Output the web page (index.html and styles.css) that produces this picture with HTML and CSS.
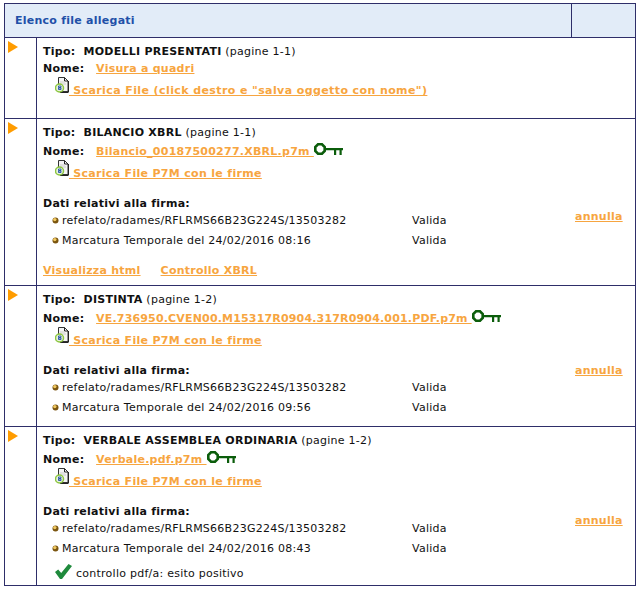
FILE: index.html
```html
<!DOCTYPE html>
<html lang="it">
<head>
    <meta charset="UTF-8">
    <title>Elenco file allegati</title>
    <link rel="stylesheet" href="styles.css">
</head>
<body>
    <svg class="defs" width="0" height="0">
        <symbol id="doc" viewBox="0 0 14 16">
            <path d="M3.500.5h6l3.500 3.500v10.500h-9.500z" fill="#f4f4f4" stroke="#333"/>
            <path d="M9.500.5v3.500h3.500M13.500 4v11M5 15.500h8.500" fill="none" stroke="#222"/>
            <path d="M5 5h5M5 7h6" stroke="#ccc"/>
            <circle cx="4.500" cy="11" r="4" fill="#e8f2e0" stroke="#8cc63f" stroke-width="1.500"/>
            <path d="M3.500 9h2.500v1.500h-2.500zM3.500 11h2.500v1.500h-2.500z" fill="none" stroke="#1f4fa8" stroke-width=".9"/>
        </symbol>
        <symbol id="key" viewBox="0 0 29 13">
            <path d="M4 1.300h4l2.700 2.700v4l-2.700 2.700h-4l-2.700-2.700v-4z" fill="none" stroke="#0b5d0b" stroke-width="2.600"/>
            <path d="M11 5h18v2.200h-18zM20 6h2.200v6h-2.200zM25.500 6h2.200v6h-2.200z" fill="#0b5d0b"/>
        </symbol>
        <symbol id="bullet" viewBox="0 0 7 7">
            <circle cx="3.500" cy="3.500" r="3" fill="#7a5510"/>
            <circle cx="2.800" cy="2.600" r="1.700" fill="#f0c860"/>
        </symbol>
    </svg>

    <table class="elenco">
        <colgroup>
            <col class="col-freccia">
            <col class="col-main">
            <col class="col-extra">
        </colgroup>
        <tr class="testata">
            <th colspan="2">Elenco file allegati</th>
            <th></th>
        </tr>

        <tr class="riga-1">
            <td class="freccia"><span class="triangolo"></span></td>
            <td colspan="2" class="dettagli">
                <p class="tipo"><b>Tipo:&nbsp; MODELLI PRESENTATI</b> (pagine 1-1)</p>
                <p class="nome"><b>Nome:</b> <a href="#">Visura a quadri</a></p>
                <p class="scarica">
                    <svg class="ico-doc"><use href="#doc"/></svg><a href="#"> Scarica File (click destro e "salva oggetto con nome")</a>
                </p>
            </td>
        </tr>

        <tr class="riga-2">
            <td class="freccia"><span class="triangolo"></span></td>
            <td colspan="2" class="dettagli">
                <p class="tipo"><b>Tipo:&nbsp; BILANCIO XBRL</b> (pagine 1-1)</p>
                <p class="nome"><b>Nome:</b> <a href="#">Bilancio_00187500277.XBRL.p7m </a><svg class="ico-key"><use href="#key"/></svg></p>
                <p class="scarica">
                    <svg class="ico-doc"><use href="#doc"/></svg><a href="#"> Scarica File P7M con le firme</a>
                </p>
                <p class="dati"><b>Dati relativi alla firma:</b></p>
                <div class="firme">
                    <svg class="ico-bullet"><use href="#bullet"/></svg>
                    <span>refelato/radames/RFLRMS66B23G224S/13503282</span>
                    <span>Valida</span>
                    <a class="annulla" href="#">annulla</a>
                    <svg class="ico-bullet"><use href="#bullet"/></svg>
                    <span>Marcatura Temporale del 24/02/2016 08:16</span>
                    <span>Valida</span>
                </div>
                <p class="azioni"><a href="#">Visualizza html</a><a href="#">Controllo XBRL</a></p>
            </td>
        </tr>

        <tr class="riga-3">
            <td class="freccia"><span class="triangolo"></span></td>
            <td colspan="2" class="dettagli">
                <p class="tipo"><b>Tipo:&nbsp; DISTINTA</b> (pagine 1-2)</p>
                <p class="nome"><b>Nome:</b> <a class="lungo" href="#">VE.736950.CVEN00.M15317R0904.317R0904.001.PDF.p7m </a><svg class="ico-key"><use href="#key"/></svg></p>
                <p class="scarica">
                    <svg class="ico-doc"><use href="#doc"/></svg><a href="#"> Scarica File P7M con le firme</a>
                </p>
                <p class="dati"><b>Dati relativi alla firma:</b></p>
                <div class="firme">
                    <svg class="ico-bullet"><use href="#bullet"/></svg>
                    <span>refelato/radames/RFLRMS66B23G224S/13503282</span>
                    <span>Valida</span>
                    <a class="annulla" href="#">annulla</a>
                    <svg class="ico-bullet"><use href="#bullet"/></svg>
                    <span>Marcatura Temporale del 24/02/2016 09:56</span>
                    <span>Valida</span>
                </div>
            </td>
        </tr>

        <tr class="riga-4">
            <td class="freccia"><span class="triangolo"></span></td>
            <td colspan="2" class="dettagli">
                <p class="tipo"><b>Tipo:&nbsp; VERBALE ASSEMBLEA ORDINARIA</b> (pagine 1-2)</p>
                <p class="nome"><b>Nome:</b> <a href="#">Verbale.pdf.p7m </a><svg class="ico-key"><use href="#key"/></svg></p>
                <p class="scarica">
                    <svg class="ico-doc"><use href="#doc"/></svg><a href="#"> Scarica File P7M con le firme</a>
                </p>
                <p class="dati"><b>Dati relativi alla firma:</b></p>
                <div class="firme">
                    <svg class="ico-bullet"><use href="#bullet"/></svg>
                    <span>refelato/radames/RFLRMS66B23G224S/13503282</span>
                    <span>Valida</span>
                    <a class="annulla" href="#">annulla</a>
                    <svg class="ico-bullet"><use href="#bullet"/></svg>
                    <span>Marcatura Temporale del 24/02/2016 08:43</span>
                    <span>Valida</span>
                </div>
                <p class="esito">
                    <svg class="ico-check" viewBox="0 0 17 15"><path d="M0 8l3.200-2.500 3 3.500 7.300-9 3.500 2-10 13h-2z" fill="#1f8a3c"/></svg>
                    controllo pdf/a: esito positivo
                </p>
            </td>
        </tr>
    </table>
</body>
</html>
```

FILE: styles.css
```css
body {
    font-family: "DejaVu Sans", Verdana, sans-serif;
    font-size: 11px;
    letter-spacing: 0.25px;
    margin: 3px 0 0 4px;
    background-color: #fff;
    color: #111;
}

p {
    margin: 0;
}

a {
    color: #f7a540;
    font-weight: bold;
}

a.lungo {
    letter-spacing: 0.17px;
}

.defs {
    position: absolute;
}

.elenco {
    border-collapse: collapse;
    table-layout: fixed;
    width: 632px;
}

.elenco th,
.elenco td {
    border: 1px solid #2e2e69;
    padding: 0;
    vertical-align: top;
}

.col-freccia {
    width: 32px;
}

.col-extra {
    width: 64px;
}

.testata {
    height: 34px;
    background: #e2ecf8;
}

.testata th {
    color: #1f50a8;
    font-size: 11px;
    text-align: left;
    vertical-align: middle;
    padding-left: 10px;
}

.riga-1 { height: 81px; }
.riga-2 { height: 167px; }
.riga-3 { height: 141px; }
.riga-4 { height: 159px; }

.triangolo {
    display: block;
    margin: 3px 0 0 3px;
    width: 0;
    height: 0;
    border-left: 10px solid #ff9c00;
    border-top: 6px solid transparent;
    border-bottom: 6px solid transparent;
}

.elenco .dettagli {
    padding: 7px 0 0 6px;
}

.tipo {
    line-height: 14px;
}

.nome {
    margin-top: 3px;
    line-height: 16px;
    white-space: nowrap;
}

.riga-1 .nome {
    margin-top: 2px;
}

.nome a {
    margin-left: 8px;
}

.scarica {
    margin: 0 0 0 12px;
    height: 20px;
    display: flex;
    align-items: flex-end;
    white-space: pre;
}

.scarica a {
    letter-spacing: 0.32px;
}

.riga-1 .scarica a {
    letter-spacing: 0.4px;
}

.ico-doc {
    width: 14px;
    height: 16px;
    margin-bottom: 4px;
}

.ico-key {
    width: 29px;
    height: 13px;
    vertical-align: -1px;
}

.ico-bullet {
    width: 7px;
    height: 7px;
}

.dati {
    margin-top: 17px;
    line-height: 14px;
}

.firme {
    display: grid;
    grid-template-columns: 10px 350px 163px auto;
    grid-auto-rows: 20px;
    align-items: center;
    margin: -1px 0 0 9px;
}

.annulla {
    grid-row: 1;
    grid-column: 4;
    align-self: start;
    margin-top: 0;
}

.riga-3 .annulla {
    margin-top: -13px;
}

.riga-4 .annulla {
    margin-top: -4px;
}

.firme span:nth-of-type(2n) {
    grid-column: 3;
}

.azioni {
    margin-top: 14px;
    line-height: 14px;
}

.azioni a {
    margin-right: 20px;
}

.esito {
    display: flex;
    align-items: flex-end;
    gap: 4px;
    margin: 6px 0 0 12px;
}

.ico-check {
    width: 17px;
    height: 15px;
    margin-bottom: 1px;
}
```
